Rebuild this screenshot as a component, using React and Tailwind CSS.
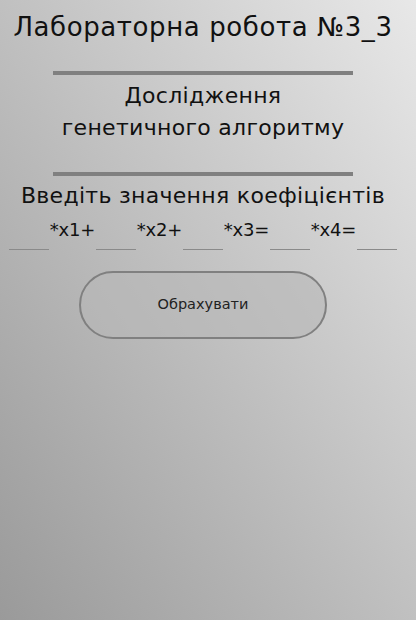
import React, { useState } from 'react';

const font = { fontFamily: '"DejaVu Sans", "Noto Sans", sans-serif' };

const Coef = ({ value, onChange }) => (
  <input
    value={value}
    onChange={(e) => onChange(e.target.value)}
    className="w-10 shrink-0 h-6 bg-transparent border-0 border-b border-[#8a8a8a] outline-none text-center text-sm"
  />
);

export default function App() {
  const [k, setK] = useState(['', '', '', '', '']);
  const setAt = (i) => (v) => setK(k.map((x, j) => (j === i ? v : x)));
  const labels = ['*x1+', '*x2+', '*x3=', '*x4='];

  return (
    <div className="w-[416px] h-[620px] bg-linear-to-tr from-[#9a9a9a] to-[#e8e8e8] text-[#111]" style={font}>
      <div className="w-[406px] flex flex-col items-center">
        <h1 className="mt-[12px] text-[26px] leading-[30px] tracking-[0.6px] whitespace-nowrap">Лабораторна робота №3_3</h1>

        <div className="mt-[29px] w-[300px] h-[4px] bg-[#808080]" />
        <p className="mt-[5px] text-center text-[22px] leading-[32px] tracking-[0.3px]">
          Дослідження
          <br />
          генетичного алгоритму
        </p>
        <div className="mt-[28px] w-[300px] h-[4px] bg-[#808080]" />

        <p className="mt-[6px] text-[22px] leading-[28px] tracking-[0.3px] whitespace-nowrap">Введіть значення коефіцієнтів</p>

        <div className="w-full h-[40px] px-[9px] flex items-end justify-between">
          {labels.map((l, i) => (
            <React.Fragment key={l}>
              <Coef value={k[i]} onChange={setAt(i)} />
              <span className="text-[18px] leading-[28px] mb-[6px] tracking-[-0.2px] whitespace-nowrap">{l}</span>
            </React.Fragment>
          ))}
          <Coef value={k[4]} onChange={setAt(4)} />
        </div>

        <button className="mt-[21px] w-[248px] h-[68px] rounded-full border-2 border-[#808080] bg-[#b8b8b8]/60 text-[14.5px] text-[#222]">
          Обрахувати
        </button>
      </div>
    </div>
  );
}
